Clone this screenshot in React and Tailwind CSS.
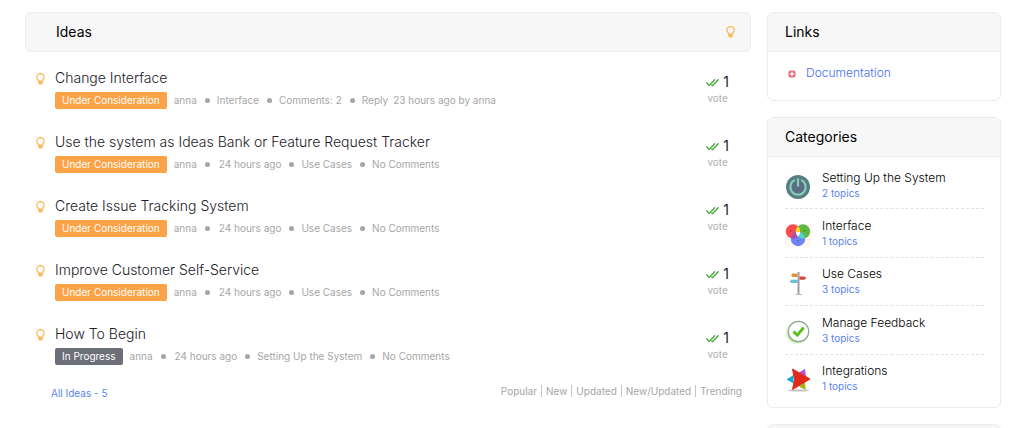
import React from "react";

const ideas = [
  { title: "Change Interface", status: "Under Consideration", meta: ["Interface", "Comments: 2"], reply: "23 hours ago by anna" },
  { title: "Use the system as Ideas Bank or Feature Request Tracker", status: "Under Consideration", time: "24 hours ago", meta: ["Use Cases", "No Comments"] },
  { title: "Create Issue Tracking System", status: "Under Consideration", time: "24 hours ago", meta: ["Use Cases", "No Comments"] },
  { title: "Improve Customer Self-Service", status: "Under Consideration", time: "24 hours ago", meta: ["Use Cases", "No Comments"] },
  { title: "How To Begin", status: "In Progress", time: "24 hours ago", meta: ["Setting Up the System", "No Comments"] },
];

const sorts = ["Popular", "New", "Updated", "New/Updated", "Trending"];

function Bulb() {
  return (
    <svg viewBox="0 0 9 12" className="h-3 w-[9px] shrink-0" fill="none" stroke="#fdb64e" strokeWidth="1.2" aria-hidden="true">
      <path d="M3 8.4C3 7 .8 6.3.8 4.2a3.7 3.5 0 0 1 7.4 0C8.2 6.3 6 7 6 8.4Z" />
      <path d="M3 8.5h3v1.7L5.3 11H3.7L3 10.2Z" fill="#fdb64e" />
    </svg>
  );
}

function Checks() {
  return (
    <svg viewBox="0 0 13 9" className="h-[9px] w-[13px]" fill="none" stroke="#3fa535" strokeWidth="1.3" strokeLinecap="round" strokeLinejoin="round" aria-hidden="true">
      <path d="M.8 4.8 3.2 7.6 8.6 1.8M5.8 7.3l.6.4 5.8-6" />
    </svg>
  );
}

function Ring() {
  return (
    <svg viewBox="0 0 8 8" className="mt-0.5 h-2 w-2" aria-hidden="true">
      <circle cx="4" cy="4" r="2.8" fill="none" stroke="#e2606a" strokeWidth="2" />
      <path d="M4 0v2.5M4 5.5V8M0 4h2.5M5.5 4H8" stroke="#f7c9cc" strokeWidth=".9" />
    </svg>
  );
}

function PowerIcon() {
  return (
    <svg viewBox="0 0 26 26" className="size-[26px]" fill="none" aria-hidden="true">
      <circle cx="13" cy="13" r="12" fill="#567f85" />
      <circle cx="13" cy="13" r="6.5" fill="#5a6d82" />
      <path d="M9.7 6.2a7.6 7.6 0 1 0 6.6 0" stroke="#87cdb8" strokeWidth="2" />
      <path d="M13 4.5v8" stroke="#87cdb8" strokeWidth="2.2" />
    </svg>
  );
}

function ColorsIcon() {
  return (
    <svg viewBox="0 0 26 26" className="size-[26px]" aria-hidden="true">
      <defs>
        <clipPath id="red-disc"><circle cx="8" cy="9.5" r="7.2" /></clipPath>
        <clipPath id="green-disc"><circle cx="18" cy="9.5" r="7.2" /></clipPath>
      </defs>
      <path d="M0 2h26v23H0z" fill="#fff7ef" />
      <circle cx="8" cy="9.5" r="7.2" fill="#fb4b55" />
      <circle cx="18" cy="9.5" r="7.2" fill="#62b844" />
      <circle cx="13" cy="17" r="7.2" fill="#6f86fb" />
      <circle cx="18" cy="9.5" r="7.2" fill="#fbe01c" clipPath="url(#red-disc)" />
      <circle cx="13" cy="17" r="7.2" fill="#a9509f" clipPath="url(#red-disc)" />
      <circle cx="13" cy="17" r="7.2" fill="#5bcfcb" clipPath="url(#green-disc)" />
      <g clipPath="url(#red-disc)"><circle cx="13" cy="17" r="7.2" fill="#fff" clipPath="url(#green-disc)" /></g>
      <path d="M5 8h1.4v1.4H5zM19 8h1.4v1.4H19zM12.3 18h1.4v1.4h-1.4z" fill="#222" fillOpacity=".4" />
    </svg>
  );
}

function SignsIcon() {
  return (
    <svg viewBox="0 0 26 26" className="size-[26px]" aria-hidden="true">
      <path d="M12.5 2h2v22h-2z" fill="#9ba0a5" />
      <path d="M10.5 24H17v1h-6.5z" fill="#b9bdc0" />
      <path d="M12.5 3.5h-5L6 5.3 7.5 7h5z" fill="#df9138" />
      <path d="M14.5 6.5h5L21.3 8l-1.8 1.8h-5z" fill="#d6444b" />
      <path d="M12.5 9.7H6.3l-1.8 1.7L6.3 13h6.2z" fill="#6fbddd" />
    </svg>
  );
}

function ApprovedIcon() {
  return (
    <svg viewBox="0 0 26 26" className="size-[26px]" fill="none" aria-hidden="true">
      <defs>
        <radialGradient id="glow"><stop offset=".6" stopColor="#a8e584" /><stop offset="1" stopColor="#a8e584" stopOpacity="0" /></radialGradient>
      </defs>
      <circle cx="11.5" cy="14.5" r="11.5" fill="url(#glow)" />
      <circle cx="13.5" cy="12.5" r="10.2" fill="#fff" stroke="#8fa787" strokeWidth="1.2" />
      <path d="m8.5 12.5 3.8 3.6 6.4-7.6" stroke="#55bf16" strokeWidth="2.8" />
    </svg>
  );
}

function StarIcon() {
  return (
    <svg viewBox="0 0 26 26" className="size-[26px]" aria-hidden="true">
      <ellipse cx="13.5" cy="23.5" rx="11" ry=".9" fill="#c2c2c2" />
      <path d="m14 5.5 6-3.5 1 8z" fill="#bd49d6" />
      <path d="M1.5 12.5 8.5 8v8.5z" fill="#13a8d8" />
      <path d="m14 19.5 6-5 .6 8.5z" fill="#a3b80e" />
      <path d="M7.5 2 25 12 7.5 22.5l2-10z" fill="#e1291c" stroke="#e1291c" strokeWidth="1" strokeLinejoin="round" />
    </svg>
  );
}

const categories = [
  { name: "Setting Up the System", topics: 2, Icon: PowerIcon },
  { name: "Interface", topics: 1, Icon: ColorsIcon },
  { name: "Use Cases", topics: 3, Icon: SignsIcon },
  { name: "Manage Feedback", topics: 3, Icon: ApprovedIcon },
  { name: "Integrations", topics: 1, Icon: StarIcon },
];

function Dot() {
  return <span className="ml-2 mr-[7px] size-[5px] rounded-full bg-[#a6a6a6]" />;
}

function Idea({ idea }) {
  const badge = idea.status === "In Progress" ? "bg-[#6c6f78]" : "bg-[#fca347]";
  return (
    <li className="flex h-16 items-start pl-[11px] pr-[22px]">
      <span className="mt-[5px] w-[19px]"><Bulb /></span>
      <div className="flex-1">
        <h2 className="text-sm font-light leading-5 text-[#1c2028]"><a href="#idea">{idea.title}</a></h2>
        <div className="mt-1 flex items-center text-[10px] leading-[17px] text-[#a6a6a6]">
          <span className={`${badge} mr-[7px] rounded-xs px-[7px] text-white`}>{idea.status}</span>
          <a href="#user">anna</a>
          {idea.time && <><Dot /><span className="ml-0.5">{idea.time}</span></>}
          {idea.meta.map((m) => (
            <React.Fragment key={m}><Dot /><span>{m}</span></React.Fragment>
          ))}
          {idea.reply && <><Dot /><a href="#reply" className="mr-[5px]">Reply</a><span>{idea.reply}</span></>}
        </div>
      </div>
      <div className="mt-1 flex flex-col items-center">
        <button type="button" aria-label="Vote" className="flex items-center gap-1 text-sm leading-5 text-[#1b1e24]">
          <Checks />1
        </button>
        <span className="text-[10px] leading-3 text-[#b0b0b0]">vote</span>
      </div>
    </li>
  );
}

function Panel({ title, children }) {
  return (
    <section className="overflow-hidden rounded-md border border-[#ebebeb]">
      <h2 className="min-h-[39px] border-b border-[#ebebeb] bg-[#f7f7f7] px-[17px] py-[9px] text-sm leading-5 text-black">{title}</h2>
      {children}
    </section>
  );
}

export default function App() {
  return (
    <div className="flex items-start gap-4 bg-white pl-[25px] pr-[23px] pt-3 font-['Inter',sans-serif]">
      <main className="flex-1">
        <header className="flex items-center justify-between rounded-md border border-[#ebebeb] bg-[#f7f7f7] py-[9px] pl-[30px] pr-[15px]">
          <h1 className="text-sm leading-5 text-black">Ideas</h1>
          <Bulb />
        </header>
        <ul className="pt-4">
          {ideas.map((idea) => <Idea key={idea.title} idea={idea} />)}
        </ul>
        <div className="-mt-[3px] flex items-start justify-between pl-[26px] pr-[9px] text-[10px] leading-3">
          <a href="#all" className="pt-0.5 text-[#5b82f5]">All Ideas - 5</a>
          <nav className="flex divide-x divide-[#c4c4c4] text-[#a6a6a6]">
            {sorts.map((s) => <a key={s} href="#sort" className="px-1 last:pr-0">{s}</a>)}
          </nav>
        </div>
      </main>
      <aside className="flex w-[234px] shrink-0 flex-col gap-4">
        <Panel title="Links">
          <div className="flex items-center gap-2.5 px-5 pb-[17px] pt-[11px] text-xs leading-5">
            <Ring /><a href="#docs" className="font-light text-[#3f6df5]">Documentation</a>
          </div>
        </Panel>
        <Panel title="Categories">
          <ul className="grid min-h-[250px] auto-rows-fr pb-1 pl-[17px] pr-4 pt-1">
            {categories.map(({ name, topics, Icon }) => (
              <li key={name} className="flex items-center gap-[11px] border-b border-dashed border-[#e2e2e2] last:border-transparent">
                <span className="pt-1"><Icon /></span>
                <div>
                  <a href="#category" className="block text-xs font-light leading-4 text-black">{name}</a>
                  <a href="#topics" className="block text-[10px] leading-[14px] text-[#5b82f5]">{topics} topics</a>
                </div>
              </li>
            ))}
          </ul>
        </Panel>
        <Panel />
      </aside>
    </div>
  );
}
